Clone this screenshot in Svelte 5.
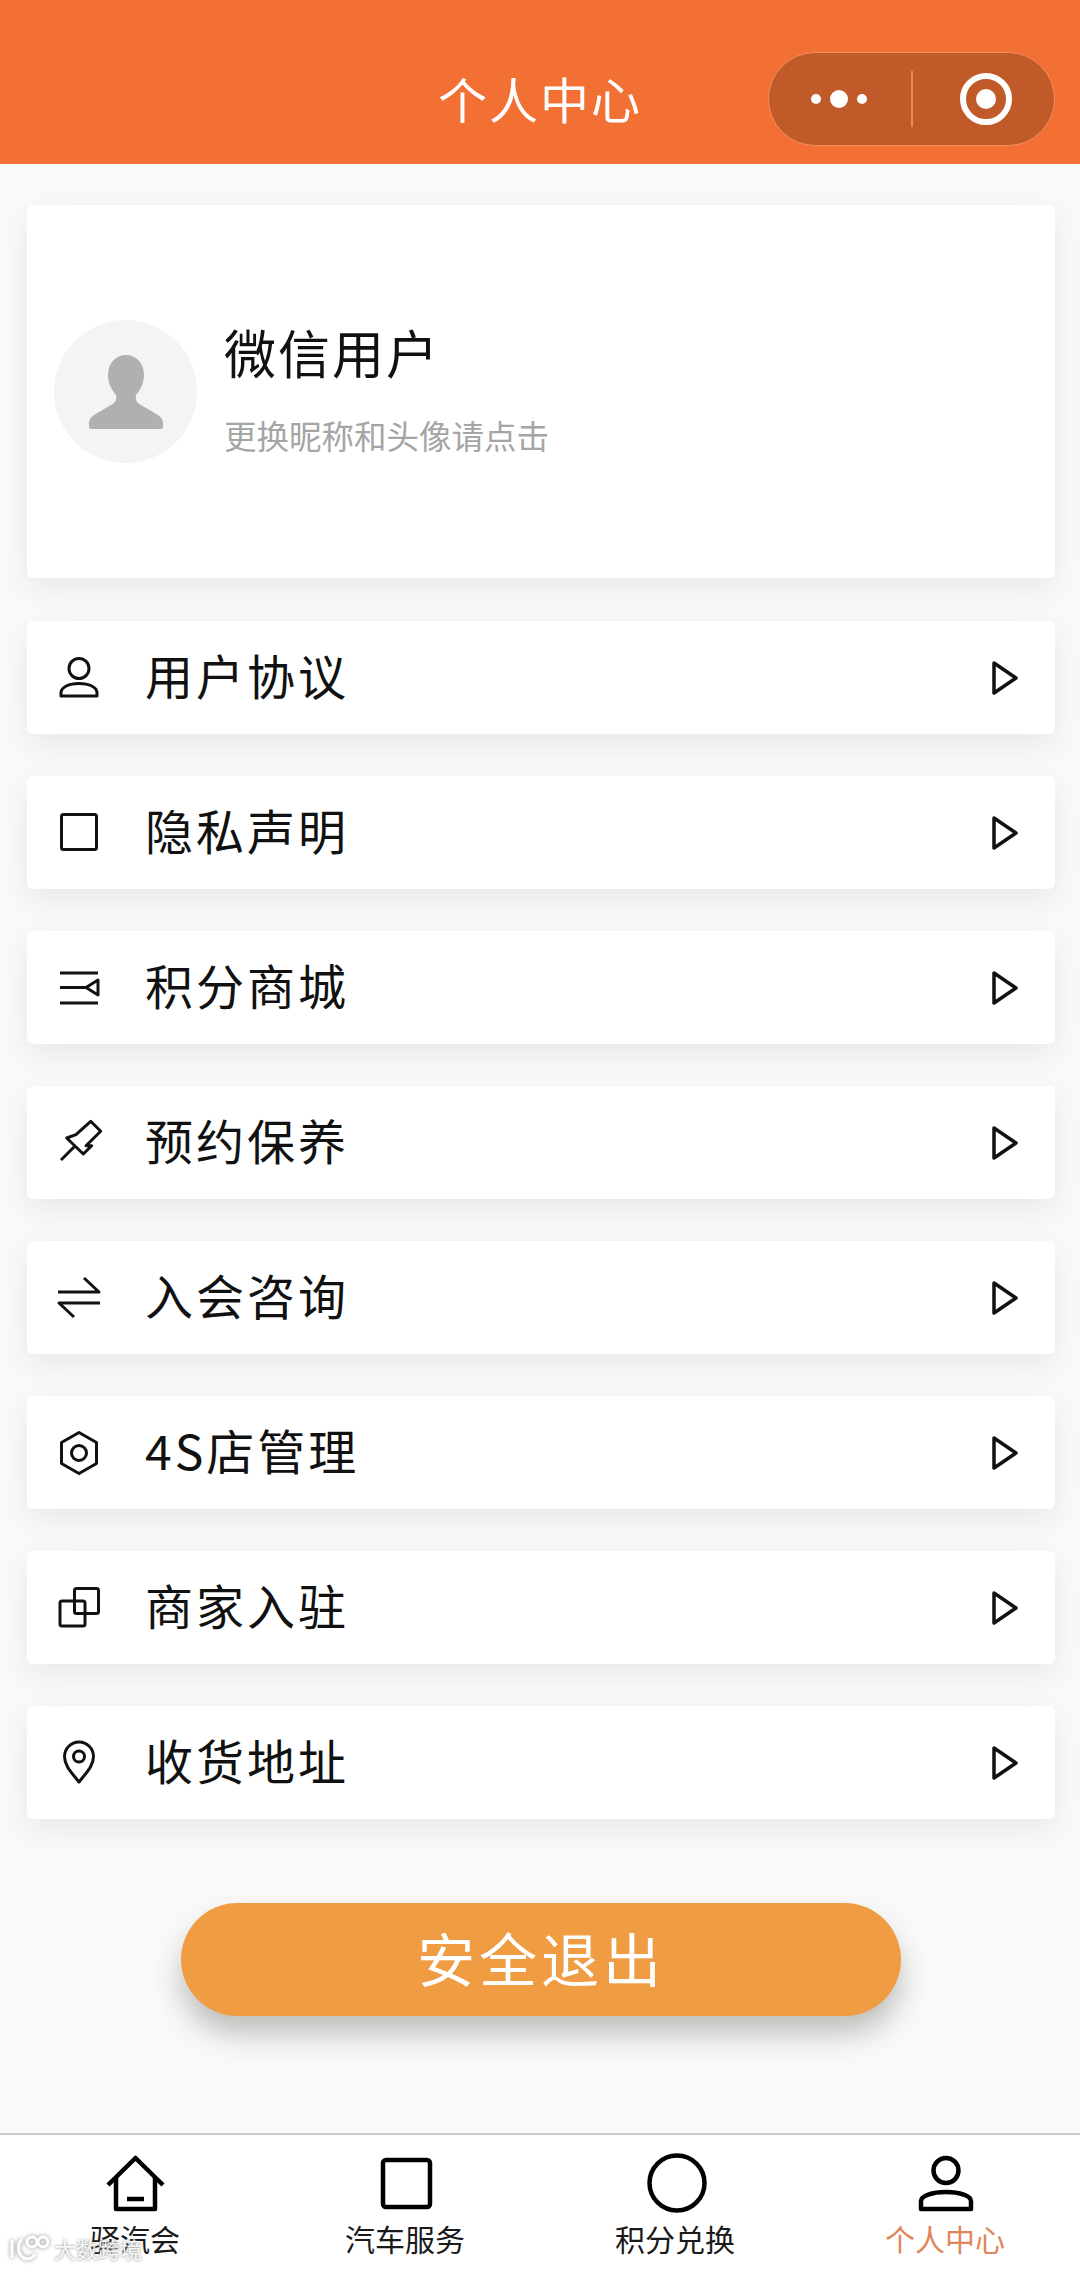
<script lang="ts">
	const rows = [
		{ label: '用户协议', icon: 'user' },
		{ label: '隐私声明', icon: 'square' },
		{ label: '积分商城', icon: 'menu' },
		{ label: '预约保养', icon: 'pin' },
		{ label: '入会咨询', icon: 'swap' },
		{ label: '4S店管理', icon: 'hex' },
		{ label: '商家入驻', icon: 'copy' },
		{ label: '收货地址', icon: 'place' }
	];

	const tabs = [
		{ label: '驿汽会', icon: 'home' },
		{ label: '汽车服务', icon: 'box' },
		{ label: '积分兑换', icon: 'circle' },
		{ label: '个人中心', icon: 'person', active: true }
	];
</script>

<div class="page">
	<header class="nav">
		<h1>个人中心</h1>
		<div class="capsule">
			<svg class="dots" width="70" height="24" viewBox="0 0 70 24" fill="#fff">
				<circle cx="12" cy="12" r="5" />
				<circle cx="35" cy="12" r="9" />
				<circle cx="58" cy="12" r="5" />
			</svg>
			<span class="sep"></span>
			<svg class="target" width="56" height="56" viewBox="0 0 56 56">
				<circle cx="28" cy="28" r="23" fill="none" stroke="#fff" stroke-width="6" />
				<circle cx="28" cy="28" r="10" fill="#fff" />
			</svg>
		</div>
	</header>

	<main class="content">
		<section class="profile">
			<div class="avatar">
				<svg width="74" height="74" viewBox="0 0 74 74" fill="#b0b0b2">
					<path d="M37 0C47 0 55 8 55 20C55 30 50 36 47 40C46 45 48 48 52 50L69 60C72 62 74 65 74 68V72Q74 74 72 74H2Q0 74 0 72V68C0 65 2 62 5 60L22 50C26 48 28 45 27 40C24 36 19 30 19 20C19 8 27 0 37 0Z" />
				</svg>
			</div>
			<div class="who">
				<div class="name">微信用户</div>
				<div class="hint">更换昵称和头像请点击</div>
			</div>
		</section>

		<ul class="list">
			{#each rows as r}
				<li class="row">
					<svg class="ico" width="46" height="46" viewBox="0 0 46 46" fill="none" stroke="#111" stroke-width="3" stroke-linejoin="round">
						{#if r.icon === 'user'}
							<circle cx="23" cy="13.5" r="10" />
							<path d="M5 41v-3c0-6 8-9.5 18-9.5s18 3.5 18 9.5v3z" />
						{:else if r.icon === 'square'}
							<rect x="5.5" y="4.5" width="35" height="35" rx="2" />
						{:else if r.icon === 'menu'}
							<path d="M4 8h38M4 22.5h25M4 38h38M42 15L30 22.5 42 30z" />
						{:else if r.icon === 'pin'}
							<path d="M5 40l14-14M10.700 18L20 14.700 34.700 1.300l10 10L30 25.700h5.700L27.300 34z" />
						{:else if r.icon === 'swap'}
							<path d="M2 17h41L28 3M44 28H3l15 14" />
						{:else if r.icon === 'hex'}
							<path d="M23 2.500l17.500 10v21L23 43.500l-17.500-10v-21z" />
							<circle cx="23" cy="23" r="7.500" />
						{:else if r.icon === 'copy'}
							<rect x="4" y="16" width="25" height="25" rx="2" />
							<rect x="18.500" y="3.500" width="24" height="25" rx="2" />
						{:else if r.icon === 'place'}
							<path d="M23 42C16 33 8.500 26 8.500 16.500a14.500 14.500 0 0 1 29 0C37.500 26 30 33 23 42z" />
							<circle cx="23" cy="16.500" r="5.500" />
						{/if}
					</svg>
					<span class="label">{r.label}</span>
					<svg class="arrow" width="28" height="36" viewBox="0 0 28 36" fill="none" stroke="#111" stroke-width="3.500" stroke-linejoin="round">
						<path d="M3 3l22 15L3 33z" />
					</svg>
				</li>
			{/each}
		</ul>

		<button class="logout">安全退出</button>
	</main>

	<nav class="tabbar">
		{#each tabs as t}
			<div class="tab" class:active={t.active}>
				<svg width="64" height="64" viewBox="0 0 64 64" fill="none" stroke="#000" stroke-width="4.500" stroke-linejoin="round">
					{#if t.icon === 'home'}
						<path d="M5 33L32.500 6 60 33" />
						<path d="M13 25V57H52V25" />
						<path d="M24 47h17" />
					{:else if t.icon === 'box'}
						<rect x="10" y="8" width="47" height="47" rx="3" />
					{:else if t.icon === 'circle'}
						<circle cx="34" cy="31" r="27.500" />
					{:else if t.icon === 'person'}
						<circle cx="33" cy="18.500" r="12.500" />
						<path d="M8 57v-8c0-5 11-9 25-9s25 4 25 9v8z" />
					{/if}
				</svg>
				<span>{t.label}</span>
			</div>
		{/each}
	</nav>

	<div class="mark">
		<svg width="42" height="28" viewBox="0 0 42 28" fill="none" stroke="#fff" stroke-width="3">
			<path d="M4 6v18M14 5c-5 5-5 15 2 19 5 2 9 0 11-4" />
			<circle cx="24" cy="8" r="5" />
			<circle cx="35" cy="8" r="5" />
		</svg>
		<span>大数跨境</span>
	</div>
</div>

<style>
	:global(body) {
		margin: 0;
		background: #f9f9f9;
	}

	.page {
		position: relative;
		width: 1080px;
		height: 2272px;
		display: flex;
		flex-direction: column;
		overflow: hidden;
		font-family: 'Noto Sans CJK SC', 'Noto Sans', sans-serif;
		background: #f9f9f9;
	}

	.nav {
		position: relative;
		flex: none;
		height: 164px;
		background: #f37035;
		box-sizing: border-box;
		padding-top: 52px;
		display: flex;
		justify-content: flex-end;
		padding-right: 25px;
	}

	h1 {
		position: absolute;
		left: 0;
		right: 0;
		top: 69px;
		margin: 0;
		text-align: center;
		font-size: 49px;
		line-height: 58px;
		font-weight: 400;
		letter-spacing: 2px;
		color: #fff;
	}

	.capsule {
		width: 287px;
		height: 94px;
		box-sizing: border-box;
		border: 1.5px solid #f58e5c;
		border-radius: 47px;
		background: #c05a28;
		display: flex;
		align-items: center;
	}

	.dots {
		margin-left: 35px;
	}

	.sep {
		width: 2px;
		height: 56px;
		margin-left: 37px;
		background: #e58a5c;
	}

	.target {
		margin-left: 45px;
	}

	.content {
		flex: 1;
		padding: 41px 25px 0 27px;
	}

	.profile {
		height: 373px;
		box-sizing: border-box;
		padding-left: 27px;
		display: flex;
		align-items: center;
		gap: 27px;
		background: #fff;
		border-radius: 6px;
		box-shadow: 0 10px 30px rgba(0, 0, 0, 0.07);
	}

	.avatar {
		width: 143px;
		height: 143px;
		border-radius: 50%;
		background: #f4f4f6;
		display: flex;
		align-items: center;
		justify-content: center;
	}

	.who {
		margin-top: -2px;
	}

	.name {
		font-size: 52px;
		line-height: 60px;
		letter-spacing: 2px;
		color: #111;
		margin-top: -3px;
	}

	.hint {
		margin-top: 31px;
		font-size: 32.5px;
		line-height: 44px;
		color: #a5a5a5;
	}

	.list {
		list-style: none;
		margin: 43px 0 0;
		padding: 0;
		display: flex;
		flex-direction: column;
		gap: 42px;
	}

	.row {
		height: 113px;
		box-sizing: border-box;
		padding: 0 36px 0 29px;
		display: flex;
		align-items: center;
		background: #fff;
		border-radius: 6px;
		box-shadow: 0 10px 30px rgba(0, 0, 0, 0.07);
	}

	.ico {
		flex: none;
		overflow: visible;
	}

	.label {
		margin: -8px 0 0 43px;
		font-size: 48px;
		letter-spacing: 3px;
		color: #111;
	}

	.arrow {
		margin-left: auto;
	}

	.logout {
		display: block;
		width: 720px;
		height: 113px;
		margin: 84px 0 0 154px;
		padding: 0 0 6px;
		border: none;
		border-radius: 57px;
		background: #f09c42;
		color: #fff;
		font-family: inherit;
		font-size: 58px;
		letter-spacing: 4px;
		box-shadow: 0 18px 28px rgba(60, 60, 50, 0.3);
	}

	.tabbar {
		flex: none;
		height: 139px;
		box-sizing: border-box;
		border-top: 2px solid #cdcdcd;
		background: #fff;
		display: grid;
		grid-template-columns: repeat(4, 1fr);
	}

	.tab {
		display: flex;
		flex-direction: column;
		align-items: center;
		padding-top: 17px;
		color: #1a1a1a;
		font-size: 30px;
		line-height: 40px;
	}

	.tab span {
		margin-top: 2px;
	}

	.tab.active {
		color: #e0865a;
	}

	.mark {
		position: absolute;
		left: 8px;
		bottom: 8px;
		display: flex;
		align-items: center;
		gap: 4px;
		color: rgba(255, 255, 255, 0.92);
		font-size: 22px;
		text-shadow: 0 0 3px rgba(110, 110, 110, 0.9);
	}

	.mark svg {
		filter: drop-shadow(0 0 2px rgba(110, 110, 110, 0.8));
	}
</style>
